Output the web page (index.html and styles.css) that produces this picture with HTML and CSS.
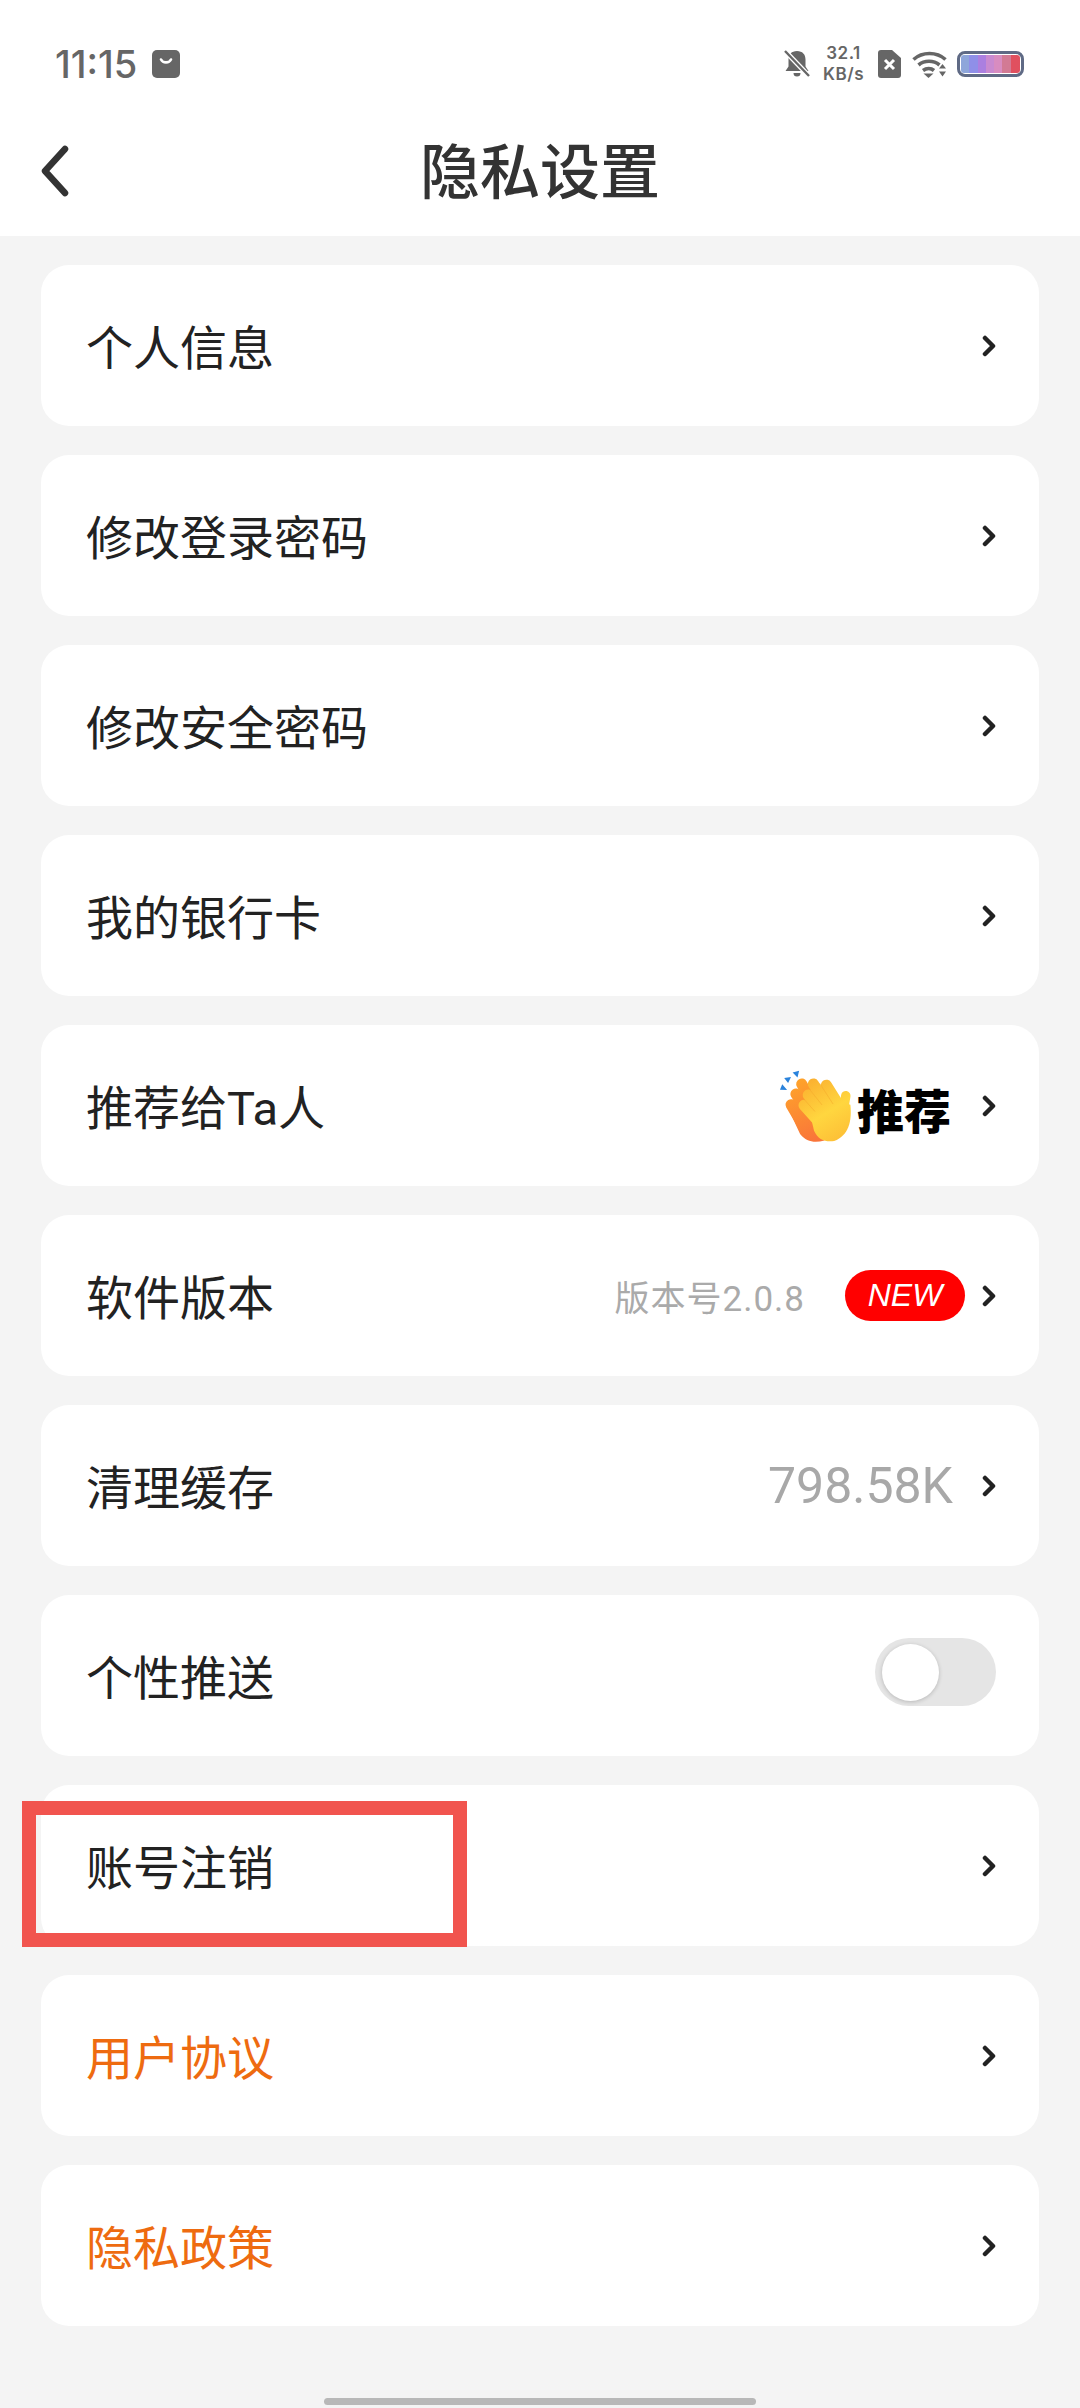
FILE: index.html
```html
<!DOCTYPE html>
<html lang="zh-CN">
<head>
    <meta charset="UTF-8">
    <meta name="viewport" content="width=device-width, initial-scale=1.0">
    <title>隐私设置</title>
    <link rel="stylesheet" href="styles.css">
</head>
<body>
    <div class="top">
        <div class="status-bar">
            <div class="status-left">
                <span class="time">11:15</span>
                <svg class="bag-icon" viewBox="0 0 28 28">
                    <rect width="28" height="28" rx="5" fill="#666"/>
                    <path d="M9 9.500a5.500 5 0 0 0 10 0" fill="none" stroke="#fff" stroke-width="2.600" stroke-linecap="round"/>
                </svg>
            </div>
            <div class="status-right">
                <svg class="bell-icon" viewBox="0 0 26 28">
                    <path d="M13 1c5.500 0 8.500 3.500 8.500 8.500v7l3 4.500H1.500l3-4.500v-7C4.500 4.500 7.500 1 13 1zM9.500 23h7a3.500 3.500 0 0 1-7 0z" fill="#666"/>
                    <path d="M1 1l24 25" stroke="#fff" stroke-width="5"/>
                    <path d="M1 1l24 25" stroke="#666" stroke-width="2.400"/>
                </svg>
                <div class="speed"><span>32.1</span><span>KB/s</span></div>
                <svg class="sim-icon" viewBox="0 0 23 28">
                    <path d="M3 0h11l9 8v17a3 3 0 0 1-3 3H3a3 3 0 0 1-3-3V3a3 3 0 0 1 3-3z" fill="#666"/>
                    <path d="M7 10l9 9M16 10l-9 9" stroke="#fff" stroke-width="3"/>
                </svg>
                <svg class="wifi-icon" viewBox="0 0 35 28">
                    <g fill="none" stroke="#666" stroke-width="3.600">
                        <path d="M1.500 9.500c9-8 23-8 32 0"/>
                        <path d="M6.500 15c6-5 15-5 21 0"/>
                        <path d="M11 20.500c3.500-2.500 8-2.500 11 0"/>
                    </g>
                    <path d="M11.500 23.500h10l-5 4.500z" fill="#666"/>
                    <path d="M27 18.500h7l-3.500-4.500zM27 21.500h7l-3.500 5z" fill="#666"/>
                </svg>
                <div class="battery"><div class="battery-fill"></div></div>
            </div>
        </div>
        <div class="nav-bar">
            <svg class="back-icon" viewBox="0 0 30 52">
                <path d="M25 4L5 26l20 22" fill="none" stroke="#333" stroke-width="6.500" stroke-linecap="round" stroke-linejoin="round"/>
            </svg>
            <h1>隐私设置</h1>
        </div>
    </div>

    <div class="list">
        <div class="row">
            <span class="label">个人信息</span>
            <div class="right"><svg class="arrow" viewBox="0 0 14 22"><path d="M3 3l8 8-8 8"/></svg></div>
        </div>
        <div class="row">
            <span class="label">修改登录密码</span>
            <div class="right"><svg class="arrow" viewBox="0 0 14 22"><path d="M3 3l8 8-8 8"/></svg></div>
        </div>
        <div class="row">
            <span class="label">修改安全密码</span>
            <div class="right"><svg class="arrow" viewBox="0 0 14 22"><path d="M3 3l8 8-8 8"/></svg></div>
        </div>
        <div class="row">
            <span class="label">我的银行卡</span>
            <div class="right"><svg class="arrow" viewBox="0 0 14 22"><path d="M3 3l8 8-8 8"/></svg></div>
        </div>
        <div class="row">
            <span class="label">推荐给Ta人</span>
            <div class="right">
                <div class="recommend">
                    <svg class="clap-icon" viewBox="110 80 225 228">
                        <defs>
                            <linearGradient id="orangeGrad" gradientUnits="userSpaceOnUse" x1="150" y1="110" x2="230" y2="300">
                                <stop offset="0" stop-color="#ffa52a"/>
                                <stop offset="1" stop-color="#f9743a"/>
                            </linearGradient>
                            <linearGradient id="yellowGrad" gradientUnits="userSpaceOnUse" x1="190" y1="120" x2="300" y2="300">
                                <stop offset="0" stop-color="#fbb030"/>
                                <stop offset="0.550" stop-color="#ffd63f"/>
                                <stop offset="1" stop-color="#fdbf36"/>
                            </linearGradient>
                        </defs>
                        <path d="M113 144l7-17 15 18zM126 108l21-3-9 18zM152 91l20-6-5 21z" fill="#2a83dc"/>
                        <g fill="none" stroke="url(#orangeGrad)" stroke-linecap="round" stroke-width="34">
                            <path d="M180 126l40 70"/>
                            <path d="M162 157l40 60"/>
                            <path d="M147 190l50 85"/>
                        </g>
                        <path d="M135 195l80 -40 35 145c-30 8 -55 5 -75 -20z" fill="url(#orangeGrad)"/>
                        <g fill="none" stroke="url(#yellowGrad)" stroke-linecap="round" stroke-width="34">
                            <path d="M216 126l48 75"/>
                            <path d="M256 130l44 70"/>
                            <path d="M200 160l50 60"/>
                            <path d="M187 192l50 55"/>
                            <path d="M316 162l-10 60" stroke-width="29"/>
                        </g>
                        <path d="M205 215l70 -45 55 20c5 50 -5 95 -50 112c-28 4 -50 -5 -62 -32z" fill="url(#yellowGrad)"/>
                        <g fill="none" stroke="#f5ac2c" stroke-linecap="round" stroke-width="2.500" opacity="0.700">
                            <path d="M236 125l40 62"/>
                            <path d="M202 140l40 50"/>
                            <path d="M186 172l34 38"/>
                        </g>
                    </svg>
                    <span class="recommend-text">推荐</span>
                </div>
                <svg class="arrow" viewBox="0 0 14 22"><path d="M3 3l8 8-8 8"/></svg>
            </div>
        </div>
        <div class="row">
            <span class="label">软件版本</span>
            <div class="right">
                <span class="version">版本号2.0.8</span>
                <span class="badge-new">NEW</span>
                <svg class="arrow" viewBox="0 0 14 22"><path d="M3 3l8 8-8 8"/></svg>
            </div>
        </div>
        <div class="row">
            <span class="label">清理缓存</span>
            <div class="right">
                <span class="cache">798.58K</span>
                <svg class="arrow" viewBox="0 0 14 22"><path d="M3 3l8 8-8 8"/></svg>
            </div>
        </div>
        <div class="row">
            <span class="label">个性推送</span>
            <div class="right"><div class="switch"><div class="knob"></div></div></div>
        </div>
        <div class="row">
            <span class="label">账号注销</span>
            <div class="right"><svg class="arrow" viewBox="0 0 14 22"><path d="M3 3l8 8-8 8"/></svg></div>
            <div class="mark-box"></div>
        </div>
        <div class="row">
            <span class="label orange">用户协议</span>
            <div class="right"><svg class="arrow" viewBox="0 0 14 22"><path d="M3 3l8 8-8 8"/></svg></div>
        </div>
        <div class="row">
            <span class="label orange">隐私政策</span>
            <div class="right"><svg class="arrow" viewBox="0 0 14 22"><path d="M3 3l8 8-8 8"/></svg></div>
        </div>
    </div>

    <div class="home-bar"></div>
</body>
</html>
```

FILE: styles.css
```css
body {
    font-family: Roboto, "Noto Sans CJK SC", sans-serif;
    background-color: #f4f4f4;
    margin: 0;
    padding: 0;
    width: 1080px;
    height: 2408px;
    overflow: hidden;
    display: flex;
    flex-direction: column;
}
.top {
    height: 236px;
    background-color: white;
}
.status-bar {
    height: 82px;
    padding: 46px 56px 0 55px;
    box-sizing: border-box;
    display: flex;
    justify-content: space-between;
    align-items: flex-start;
}
.status-left {
    display: flex;
    align-items: center;
    height: 36px;
    gap: 15px;
}
.time {
    font-family: Inter, sans-serif;
    font-weight: 500;
    font-size: 38px;
    color: #666;
}
.bag-icon {
    width: 28px;
    height: 28px;
}
.status-right {
    display: flex;
    align-items: center;
    height: 36px;
}
.bell-icon {
    width: 26px;
    height: 28px;
    margin-right: 13px;
}
.speed {
    display: flex;
    flex-direction: column;
    align-items: center;
    font-family: Inter, sans-serif;
    font-weight: 600;
    font-size: 17px;
    letter-spacing: 0.5px;
    line-height: 21px;
    color: #666;
    margin-right: 14px;
}
.sim-icon {
    width: 23px;
    height: 28px;
    margin-right: 11px;
}
.wifi-icon {
    width: 35px;
    height: 28px;
    margin-right: 10px;
}
.battery {
    width: 67px;
    height: 26px;
    box-sizing: border-box;
    border: 3px solid #5f6a85;
    border-radius: 8px;
    padding: 1px;
}
.battery-fill {
    height: 100%;
    border-radius: 3px;
    background: linear-gradient(90deg, #8ea6da 0 14%, #8f8fe8 14% 28%, #ab7fe0 28% 42%, #c98ad0 42% 56%, #d88cc0 56% 70%, #d27a94 70% 84%, #e0505f 84%);
}
.nav-bar {
    height: 154px;
    box-sizing: border-box;
    padding-top: 17px;
    position: relative;
    display: flex;
    justify-content: center;
    align-items: center;
}
.back-icon {
    position: absolute;
    left: 40px;
    top: 63px;
    width: 30px;
    height: 52px;
}
.nav-bar h1 {
    margin: 0;
    font-size: 60px;
    font-weight: 500;
    color: #333;
}
.list {
    padding: 29px 41px 0 41px;
    display: flex;
    flex-direction: column;
    gap: 29px;
}
.row {
    height: 161px;
    background-color: white;
    border-radius: 28px;
    padding: 0 43px 0 45px;
    display: flex;
    justify-content: space-between;
    align-items: center;
    position: relative;
}
.label {
    font-size: 47px;
    color: #222;
    padding-bottom: 3px;
}
.label.orange {
    color: #ee6b10;
}
.right {
    display: flex;
    align-items: center;
}
.arrow {
    width: 14px;
    height: 22px;
    fill: none;
    stroke: #222;
    stroke-width: 4.500;
    stroke-linecap: round;
    stroke-linejoin: round;
}
.recommend {
    display: flex;
    align-items: center;
    gap: 5px;
    margin-right: 31px;
}
.clap-icon {
    width: 73px;
    height: 74px;
}
.recommend-text {
    font-size: 47px;
    font-weight: 900;
    color: #000;
    position: relative;
    top: 3px;
}
.version {
    font-size: 35px;
    letter-spacing: 1px;
    color: #aaa;
    margin-right: 40px;
}
.badge-new {
    width: 120px;
    height: 51px;
    border-radius: 26px;
    background-color: #f00;
    color: white;
    font-family: "Liberation Sans", sans-serif;
    font-style: italic;
    font-size: 32px;
    display: flex;
    justify-content: center;
    align-items: center;
    margin-right: 17px;
}
.cache {
    font-size: 50px;
    color: #a8a8a8;
    margin-right: 29px;
}
.switch {
    width: 121px;
    height: 68px;
    border-radius: 34px;
    background-color: #e5e5e5;
    padding: 6px 7px;
    box-sizing: border-box;
    margin-bottom: 8px;
}
.knob {
    width: 57px;
    height: 57px;
    border-radius: 50%;
    background-color: white;
    box-shadow: 0 1px 4px rgba(0,0,0,0.2);
}
.mark-box {
    position: absolute;
    left: -19px;
    top: 16px;
    width: 445px;
    height: 146px;
    box-sizing: border-box;
    border: 14px solid #f1544e;
}
.home-bar {
    width: 432px;
    height: 7px;
    border-radius: 4px;
    background-color: #b8b8b8;
    margin: auto 0 3px 324px;
}
```
